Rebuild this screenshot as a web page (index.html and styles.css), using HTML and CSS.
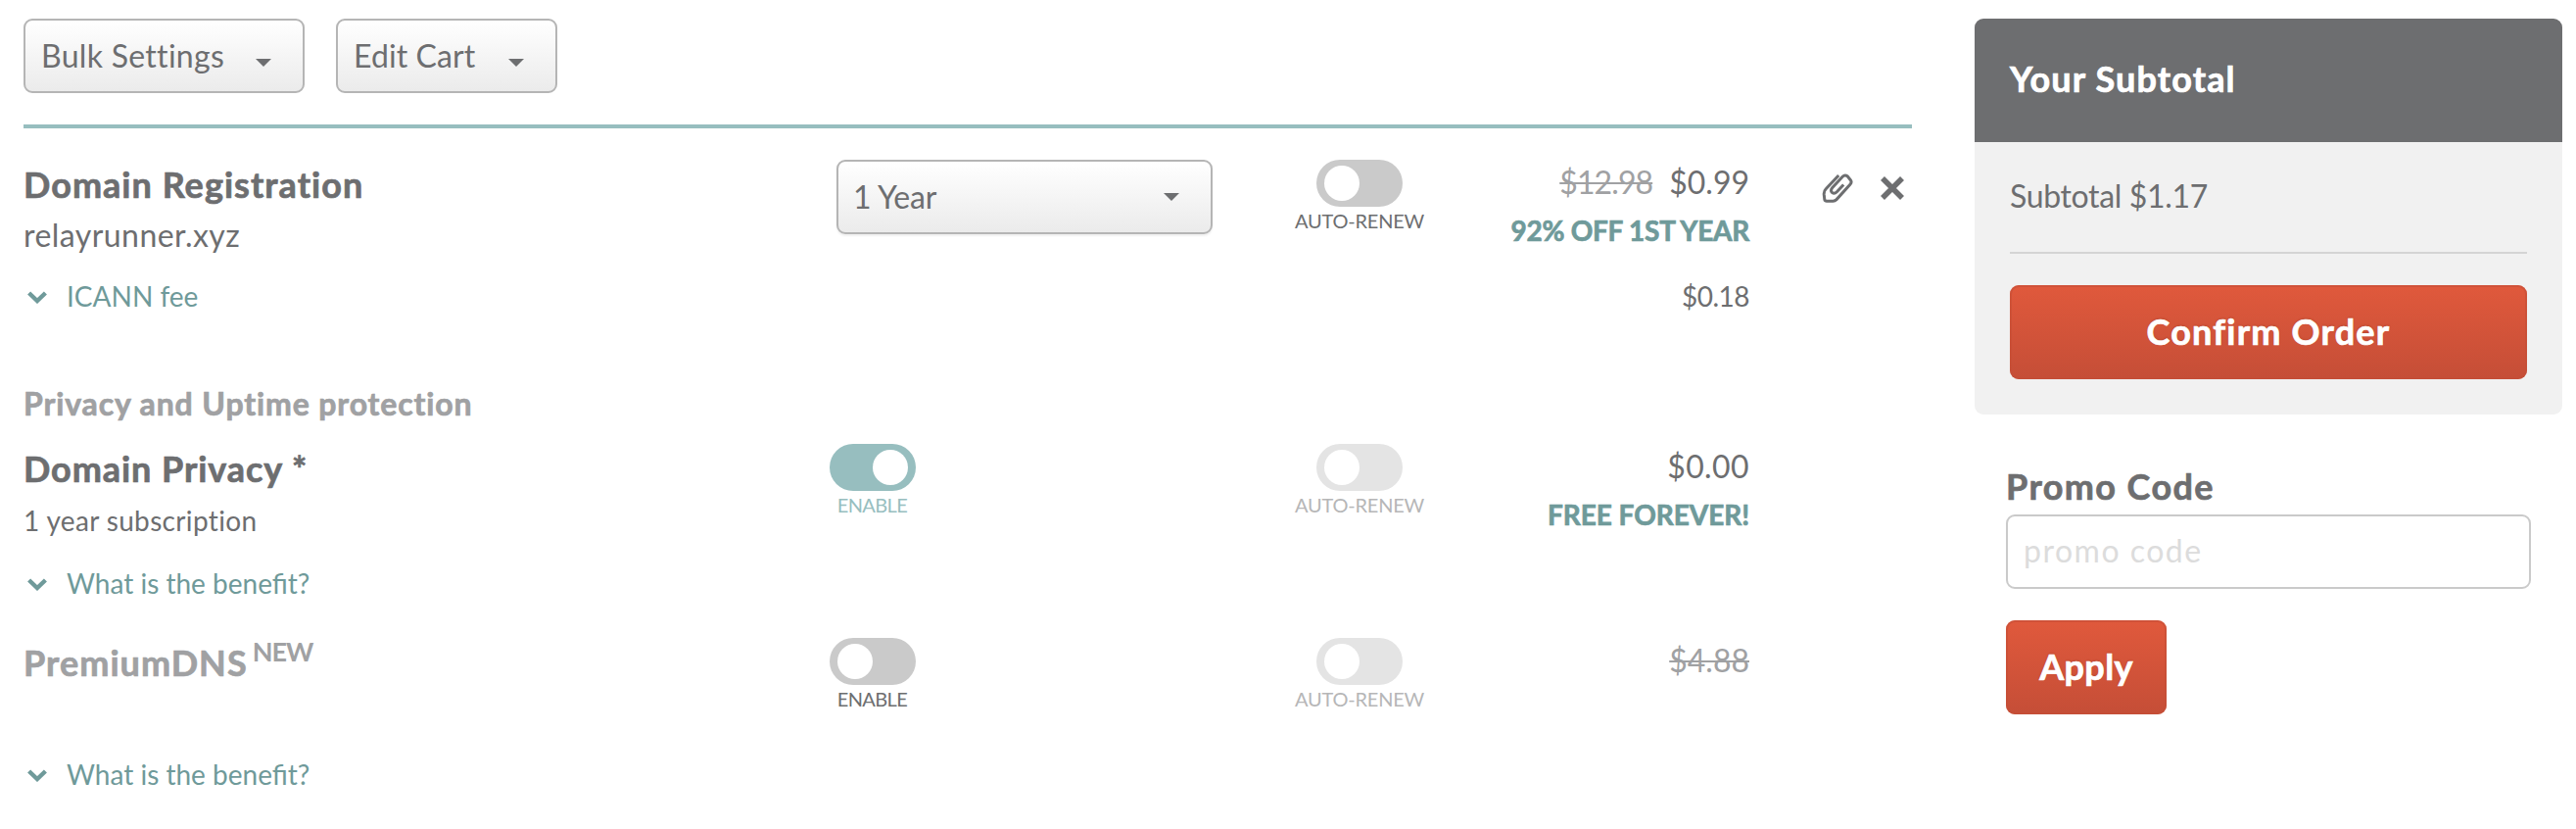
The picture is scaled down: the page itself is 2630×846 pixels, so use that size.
FILE: index.html
```html
<!DOCTYPE html>
<html lang="en">
<head>
<meta charset="utf-8">
<title>Shopping Cart</title>
<link rel="stylesheet" href="styles.css">
</head>
<body>
<svg class="sprite" aria-hidden="true">
  <symbol id="chevron" viewBox="0 0 20 13"><path d="M1.6 2 10 10 18.4 2" fill="none" stroke="currentColor" stroke-width="4.4"/></symbol>
  <symbol id="caret" viewBox="0 0 16 8"><path d="M0 0H16L8 8Z" fill="currentColor"/></symbol>
</svg>
<div class="page">
  <main class="cart">
    <div class="toolbar">
      <button class="dropdown bulk"><span>Bulk Settings</span><svg><use href="#caret"/></svg></button>
      <button class="dropdown edit"><span>Edit Cart</span><svg><use href="#caret"/></svg></button>
    </div>

    <section class="item registration">
      <div class="info">
        <h2 class="title">Domain Registration</h2>
        <p class="domain">relayrunner.xyz</p>
        <a class="more icann"><svg><use href="#chevron"/></svg><span>ICANN fee</span></a>
      </div>
      <div class="term">
        <div class="select"><span>1 Year</span><svg><use href="#caret"/></svg></div>
      </div>
      <div class="switch">
        <span class="toggle"></span><span class="label">AUTO-RENEW</span>
      </div>
      <div class="price">
        <p class="amount"><s class="wide-price">$12.98</s><span>$0.99</span></p>
        <p class="promo off">92% OFF 1ST YEAR</p>
        <p class="fee">$0.18</p>
      </div>
      <div class="actions">
        <svg class="clip" viewBox="0 0 32 30"><path d="M17.2 2 4.2 15.8Q2 18 2.2 21.2L2.8 26.6Q3.2 28.2 5 28.2H11.5Q13.4 28.2 15 26.6L28.9 11.3Q31 9 29.3 6.7L26.4 3Q23.6 .8 21.2 3.2L10.8 14.6Q8.4 17.4 10.4 19.4Q12.8 21.4 15.4 18.8L22.2 11.4" fill="none" stroke="currentColor" stroke-width="3"/></svg>
        <svg class="remove" viewBox="0 0 24 24"><path d="M2 2 22 22M22 2 2 22" stroke="currentColor" stroke-width="5.6"/></svg>
      </div>
    </section>

    <h3 class="group">Privacy and Uptime protection</h3>

    <section class="item privacy">
      <div class="info">
        <h2 class="title">Domain Privacy *</h2>
        <p class="subscription">1 year subscription</p>
        <a class="more"><svg><use href="#chevron"/></svg><span>What is the benefit?</span></a>
      </div>
      <div class="term">
        <div class="switch active"><span class="toggle"></span><span class="label enable">ENABLE</span></div>
      </div>
      <div class="switch disabled">
        <span class="toggle"></span><span class="label">AUTO-RENEW</span>
      </div>
      <div class="price">
        <p class="amount zero">$0.00</p>
        <p class="promo">FREE FOREVER!</p>
      </div>
    </section>

    <section class="item dns">
      <div class="info">
        <h2 class="title muted">PremiumDNS<span class="new">NEW</span></h2>
        <a class="more"><svg><use href="#chevron"/></svg><span>What is the benefit?</span></a>
      </div>
      <div class="term">
        <div class="switch"><span class="toggle"></span><span class="label enable">ENABLE</span></div>
      </div>
      <div class="switch disabled">
        <span class="toggle"></span><span class="label">AUTO-RENEW</span>
      </div>
      <div class="price">
        <p class="amount"><s>$4.88</s></p>
      </div>
    </section>
  </main>

  <aside class="side">
    <div class="card">
      <h2 class="card-head">Your Subtotal</h2>
      <div class="card-body">
        <p class="subtotal">Subtotal $1.17</p>
        <button class="primary confirm">Confirm Order</button>
      </div>
    </div>
    <form class="promo-form">
      <label class="promo-label" for="promo">Promo Code</label>
      <input class="promo-input" id="promo" type="text" placeholder="promo code">
      <button class="primary apply" type="button">Apply</button>
    </form>
  </aside>
</div>
</body>
</html>
```
FILE: styles.css
```css
* { box-sizing: border-box; }
body {
  margin: 0;
  background: #fff;
  color: #6d6e70;
  font: 32px/40px Lato, "Open Sans", sans-serif;
}
h2, h3, p { margin: 0; }
svg { display: block; flex: none; }
button { font: inherit; color: inherit; cursor: pointer; }
.sprite { position: absolute; width: 0; height: 0; }

.page { display: flex; gap: 64px; padding: 19px 14px 0 24px; }
.cart { width: 1928px; }

/* Toolbar */
.toolbar {
  display: flex;
  gap: 32px;
  height: 112px;
  border-bottom: 4px solid #97bebf;
}
.dropdown, .select {
  display: flex;
  height: 76px;
  border: 2px solid #b5b5b5;
  border-radius: 9px;
  background: linear-gradient(#fff, #ebebeb);
}
.dropdown { align-items: flex-start; justify-content: space-between; padding: 16px 32px 0 16px; }
.dropdown svg { width: 16px; height: 8px; margin-top: 23px; }
.bulk { width: 287px; letter-spacing: .3px; }
.edit { width: 226px; letter-spacing: .1px; }

/* Cart rows */
.item { display: grid; grid-template-columns: 823px 473px 136px 330px 166px; align-items: start; }
.registration { padding-top: 32px; }
.privacy { padding-top: 21px; }
.dns { padding-top: 38px; }
.info, .price { padding-top: 3px; }

.title, .group, .promo, .card-head, .promo-label, .primary { -webkit-text-stroke: .7px currentColor; }
.title { font-size: 36px; line-height: 44px; font-weight: 700; letter-spacing: 1.03px; }
.privacy .title { letter-spacing: .93px; }
.muted { display: flex; height: 44px; color: #a0a1a3; }
.new { margin: -9px 0 0 5px; font-size: 27px; line-height: 40px; letter-spacing: -1px; -webkit-text-stroke-width: 0; }
.domain { margin-top: 10px; letter-spacing: .45px; }
.subscription { margin-top: 13px; font-size: 28px; line-height: 36px; letter-spacing: .35px; }
.more {
  display: flex;
  align-items: center;
  gap: 20px;
  margin-top: 28px;
  padding-left: 4px;
  font-size: 28px;
  line-height: 36px;
  color: #6f9a9a;
}
.more svg { width: 20px; height: 13px; margin-top: 2px; }
.registration .more { margin-top: 24px; }
.dns .more { margin-top: 74px; }

.select {
  width: 384px;
  margin-left: 7px;
  padding: 16px 32px 0 15px;
  justify-content: space-between;
  box-shadow: 0 2px 2px rgba(0, 0, 0, .06);
}
.select span { letter-spacing: -.2px; }
.select svg { width: 16px; height: 8px; margin-top: 16px; }

/* Switches */
.term .switch { width: 88px; }
.switch { display: flex; flex-direction: column; align-items: center; gap: 1px; }
.toggle { width: 88px; height: 48px; padding: 6px 8px; border-radius: 24px; background: #cacaca; }
.toggle::before { content: ""; display: block; width: 36px; height: 36px; border-radius: 50%; background: #fff; }
.label { font-size: 20px; line-height: 26px; letter-spacing: -.2px; white-space: nowrap; }
.enable { letter-spacing: -.6px; margin-right: 1px; }
.active .toggle { background: #97bebf; }
.active .toggle::before { margin-left: 36px; }
.active .label { color: #97bebf; }
.disabled .toggle { background: #e4e4e4; }
.disabled .label { color: #b6b6b7; }

/* Prices */
.price { text-align: right; }
.amount s { color: #a0a1a3; text-decoration-thickness: 2px; }
.wide-price { margin-right: 17px; letter-spacing: -.9px; }
.zero { letter-spacing: .4px; }
.promo { margin-top: 11px; font-size: 28px; line-height: 36px; font-weight: 700; color: #6f9a9a; letter-spacing: -.05px; }
.off { letter-spacing: -.25px; }
.fee { margin-top: 31px; font-size: 28px; line-height: 36px; letter-spacing: -.5px; }

.actions { display: flex; padding: 14px 0 0 74px; gap: 28px; }
.clip { width: 32px; height: 30px; }
.remove { width: 24px; height: 24px; margin-top: 3px; }

.group { margin-top: 72px; font-size: 32px; line-height: 40px; font-weight: 700; letter-spacing: .87px; color: #a0a1a3; }

/* Sidebar */
.side { width: 600px; }
.card { border-radius: 9px; background: #f1f1f1; overflow: hidden; }
.card-head {
  padding: 39px 36px 43px;
  background: #6d6e70;
  color: #fff;
  font-size: 36px;
  line-height: 44px;
  letter-spacing: 1.15px;
}
.card-body { padding: 35px 36px 36px; }
.subtotal { height: 79px; margin-bottom: 32px; border-bottom: 2px solid #d4d4d4; letter-spacing: -.35px; }
.primary {
  display: block;
  height: 96px;
  padding: 0 0 3px;
  border: 0;
  border-radius: 9px;
  background: linear-gradient(#e0593c, #c54e37);
  box-shadow: inset 0 0 0 2px rgba(197, 78, 55, .6);
  color: #fff;
  font-size: 36px;
  font-weight: 700;
  text-shadow: 0 -1px 2px rgba(120, 40, 20, .3);
}
.confirm { width: 528px; letter-spacing: 1.2px; }
.promo-form { padding: 51px 32px 0; }
.promo-label { display: block; font-size: 36px; line-height: 44px; font-weight: 700; letter-spacing: 1.4px; }
.promo-input {
  display: block;
  width: 536px;
  height: 76px;
  margin: 7px 0 32px;
  padding: 0 16px 3px;
  border: 2px solid #cacaca;
  border-radius: 9px;
  font: inherit;
  letter-spacing: 1.5px;
}
.promo-input::placeholder { color: #dcdcdc; opacity: 1; }
.apply { width: 164px; letter-spacing: .35px; }
```
